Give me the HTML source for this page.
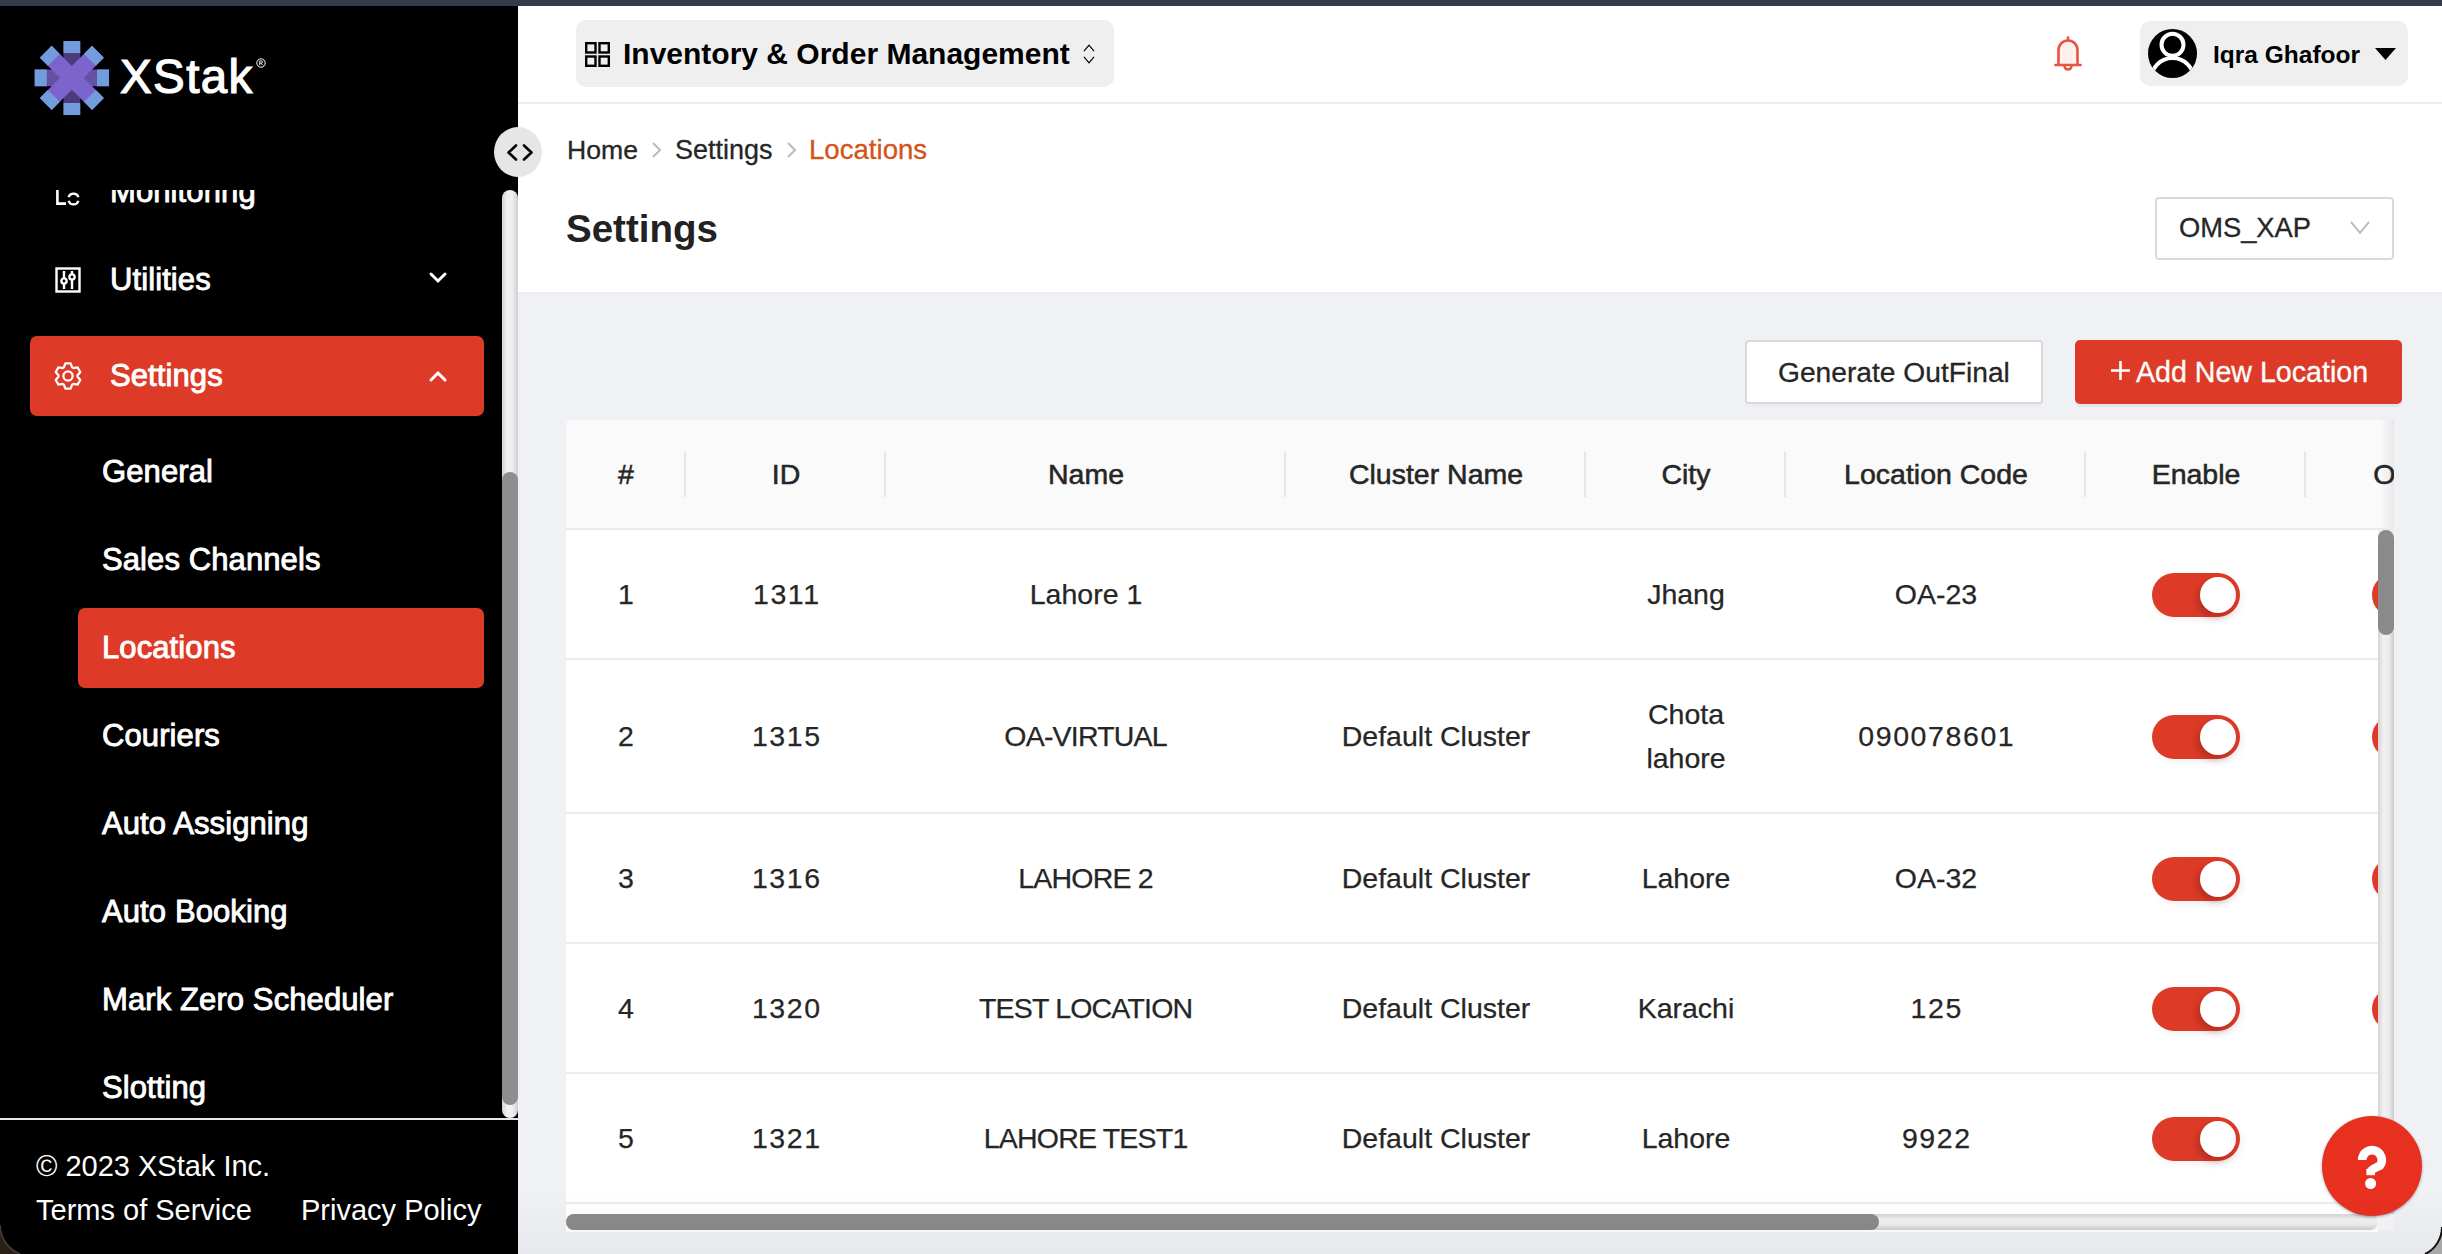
<!DOCTYPE html><html><head><meta charset="utf-8"><style>
*{box-sizing:border-box;margin:0;padding:0}
html,body{width:2442px;height:1254px;overflow:hidden;background:#f0f1f5;font-family:"Liberation Sans",sans-serif}
.a{position:absolute}
.t{position:absolute;white-space:nowrap}
.si{color:#fff;font-size:31px;letter-spacing:0.1px;-webkit-text-stroke:0.9px #fff}
.foot{color:#fff;font-size:29px}
.cell{color:#262626;font-size:28.5px;-webkit-text-stroke:0.25px #262626}
.hd{color:#262626;font-size:28.5px;-webkit-text-stroke:0.55px #262626}
.toggle{position:absolute;width:88px;height:44px;border-radius:22px;background:#dd3b28;box-shadow:3px 4px 6px rgba(0,0,0,.05)}
.toggle:after{content:"";position:absolute;left:48px;top:4px;width:36px;height:36px;border-radius:50%;background:#fff;box-shadow:-3px 4px 7px rgba(110,20,10,.35)}
.rb{position:absolute;left:566px;width:1812px;height:2px;background:#ececec}
.vd{position:absolute;top:452px;width:2px;height:45px;background:#e6e6e6}
</style></head><body>
<div class="a" style="left:0;top:0;width:2442px;height:6px;background:#363a49"></div>
<div class="a" style="left:0;top:6px;width:518px;height:1248px;background:#000"></div>
<svg class="a" style="left:30px;top:36px" width="84" height="84" viewBox="0 0 1254 1254">
<rect x="500" y="75" width="250" height="1105" fill="#4b3b7b"/>
<rect x="70" y="500" width="1110" height="250" fill="#6550a6"/>
<rect x="500" y="75" width="250" height="180" fill="#739cdc"/>
<rect x="500" y="1000" width="250" height="180" fill="#739cdc"/>
<rect x="70" y="500" width="180" height="250" fill="#739cdc"/>
<rect x="1000" y="500" width="180" height="250" fill="#739cdc"/>
<g transform="rotate(45 625 625)"><rect x="74" y="500" width="1102" height="250" fill="#7b64cc"/><rect x="74" y="500" width="170" height="250" fill="#739cdc"/><rect x="1006" y="500" width="170" height="250" fill="#739cdc"/></g>
<g transform="rotate(-45 625 625)"><rect x="74" y="500" width="1102" height="250" fill="#7b64cc"/><rect x="74" y="500" width="170" height="250" fill="#739cdc"/><rect x="1006" y="500" width="170" height="250" fill="#739cdc"/></g>
</svg>
<div class="t " style="left:120px;top:49.099999999999994px;line-height:56px;height:56px;color:#fff;font-size:47.5px;letter-spacing:1.4px;-webkit-text-stroke:1.2px #fff">XStak</div>
<svg class="a" style="left:256px;top:58px" width="10" height="10" viewBox="0 0 10 10" fill="none" stroke="#fff" stroke-width="1"><circle cx="5" cy="5" r="4.2"/><path d="M3.7 7.2 V2.9 H5.4 A1.1 1.1 0 0 1 5.4 5.1 H3.7 M5.2 5.1 L6.5 7.2" stroke-width="0.9"/></svg>
<div class="a" style="left:0;top:190px;width:500px;height:928px;overflow:hidden">
<div class="t si" style="left:110px;top:-18.0px;line-height:40px;height:40px;">Monitoring</div>
<svg class="a" style="left:50px;top:-10px" width="34" height="30" viewBox="0 0 34 30" fill="none" stroke="#fff" stroke-width="2.6">
<path d="M7.4 0 V23.6 H16"/><path d="M18.52 17.19 A5.3 5.3 0 0 1 28.48 17.19" stroke-width="2.2"/><path d="M28.48 20.81 A5.3 5.3 0 0 1 18.52 20.81" stroke-width="2.2"/></svg>
<div class="t si" style="left:110px;top:70.0px;line-height:40px;height:40px;">Utilities</div>
<svg class="a" style="left:54px;top:76px" width="28" height="28" viewBox="0 0 28 28" fill="none" stroke="#fff" stroke-width="2.4">
<rect x="2.5" y="2.5" width="23" height="23"/><path d="M10 5 V23 M18 5 V23"/><circle cx="10" cy="15" r="2.6" fill="#000"/><circle cx="18" cy="11" r="2.6" fill="#000"/></svg>
<svg class="a" style="left:428px;top:80px" width="20" height="16" viewBox="0 0 20 16" fill="none" stroke="#fff" stroke-width="3" stroke-linecap="round"><path d="M3 4 L10 11 L17 4"/></svg>
<div class="a" style="left:30px;top:146px;width:454px;height:80px;background:#dd3b28;border-radius:7px"></div>
<div class="t si" style="left:110px;top:166.0px;line-height:40px;height:40px;">Settings</div>
<svg class="a" style="left:54px;top:172px" width="28" height="28" viewBox="0 0 28 28" fill="none" stroke="#fff" stroke-width="2.2" stroke-linejoin="round">
<path d="M9.94 5.30 L11.32 1.38 L16.68 1.38 L18.06 5.30 L19.51 6.14 L23.59 5.37 L26.27 10.01 L23.56 13.16 L23.56 14.84 L26.27 17.99 L23.59 22.63 L19.51 21.86 L18.06 22.70 L16.68 26.62 L11.32 26.62 L9.94 22.70 L8.49 21.86 L4.41 22.63 L1.73 17.99 L4.44 14.84 L4.44 13.16 L1.73 10.01 L4.41 5.37 L8.49 6.14Z"/><circle cx="14" cy="14" r="4.6"/></svg>
<svg class="a" style="left:428px;top:179px" width="20" height="16" viewBox="0 0 20 16" fill="none" stroke="#fff" stroke-width="3" stroke-linecap="round"><path d="M3 11 L10 4 L17 11"/></svg>
<div class="a" style="left:78px;top:418px;width:406px;height:80px;background:#dd3b28;border-radius:7px"></div>
<div class="t si" style="left:102px;top:262.0px;line-height:40px;height:40px;">General</div>
<div class="t si" style="left:102px;top:350.0px;line-height:40px;height:40px;">Sales Channels</div>
<div class="t si" style="left:102px;top:438.0px;line-height:40px;height:40px;">Locations</div>
<div class="t si" style="left:102px;top:526.0px;line-height:40px;height:40px;">Couriers</div>
<div class="t si" style="left:102px;top:614.0px;line-height:40px;height:40px;">Auto Assigning</div>
<div class="t si" style="left:102px;top:702.0px;line-height:40px;height:40px;">Auto Booking</div>
<div class="t si" style="left:102px;top:790.0px;line-height:40px;height:40px;">Mark Zero Scheduler</div>
<div class="t si" style="left:102px;top:878.0px;line-height:40px;height:40px;">Slotting</div>
</div>
<div class="a" style="left:502px;top:190px;width:16px;height:928px;border-radius:8px;background:linear-gradient(90deg,#d6d6d6,#f2f2f2 35%,#eeeeee 65%,#cfcfcf)"></div>
<div class="a" style="left:502px;top:472px;width:16px;height:633px;border-radius:8px;background:#8e8e8e"></div>
<div class="a" style="left:0;top:1118px;width:518px;height:2px;background:#e6e6e6"></div>
<div class="t foot" style="left:36px;top:1145.7px;line-height:40px;height:40px;">&copy; 2023 XStak Inc.</div>
<div class="t foot" style="left:36px;top:1190.0px;line-height:40px;height:40px;">Terms of Service</div>
<div class="t foot" style="left:301px;top:1190.0px;line-height:40px;height:40px;">Privacy Policy</div>
<div class="a" style="left:518px;top:6px;width:1924px;height:286px;background:#fff"></div>
<div class="a" style="left:518px;top:102px;width:1924px;height:2px;background:#ececec"></div>
<div class="a" style="left:576px;top:20px;width:538px;height:67px;background:#efefef;border-radius:10px"></div>
<svg class="a" style="left:585px;top:42px" width="25" height="25" viewBox="0 0 25 25" fill="none" stroke="#000" stroke-width="2.4">
<rect x="1.2" y="1.2" width="9.3" height="9.3"/><rect x="14.5" y="1.2" width="9.3" height="9.3"/><rect x="1.2" y="14.5" width="9.3" height="9.3"/><rect x="14.5" y="14.5" width="9.3" height="9.3"/></svg>
<div class="t " style="left:623px;top:34.1px;line-height:40px;height:40px;color:#000;font-weight:bold;font-size:30px">Inventory &amp; Order Management</div>
<svg class="a" style="left:1083px;top:44px" width="12" height="21" viewBox="0 0 12 21" fill="none" stroke="#000" stroke-width="1.2"><path d="M1 7.2 L6 1.2 L11 7.2 M1 12.8 L6 18.8 L11 12.8"/></svg>
<svg class="a" style="left:2052px;top:34px" width="32" height="40" viewBox="0 0 32 40" fill="#fdf0ee" stroke="#e8553f" stroke-width="2.6" stroke-linejoin="round" stroke-linecap="round">
<path d="M16 3.5 V6.5"/><path d="M6.5 30 V16 A9.5 9.5 0 0 1 25.5 16 V30"/><path d="M3.5 31 H28.5"/><path d="M12.5 32 A3.5 3.5 0 0 0 19.5 32"/></svg>
<div class="a" style="left:2140px;top:21px;width:268px;height:65px;background:#efefef;border-radius:10px"></div>
<svg class="a" style="left:2148px;top:29px" width="49" height="49" viewBox="0 0 49 49">
<defs><clipPath id="cc"><circle cx="24.5" cy="24.5" r="24.5"/></clipPath></defs>
<circle cx="24.5" cy="24.5" r="24.5" fill="#000"/>
<g clip-path="url(#cc)" fill="none" stroke="#fff" stroke-width="3.6"><circle cx="24.5" cy="15.8" r="11" stroke-width="4"/><circle cx="24.5" cy="50.5" r="21.5" stroke-width="4"/></g></svg>
<div class="t " style="left:2213px;top:34.5px;line-height:40px;height:40px;color:#000;font-weight:bold;font-size:24.5px">Iqra Ghafoor</div>
<svg class="a" style="left:2375px;top:47px" width="21" height="14" viewBox="0 0 21 14"><path d="M0 1 H21 L10.5 13 Z" fill="#000"/></svg>
<div class="a" style="left:494px;top:127px;width:48px;height:50px;border-radius:50%;background:#e6e6e6"></div>
<svg class="a" style="left:505px;top:143px" width="30" height="18" viewBox="0 0 30 18" fill="none" stroke="#000" stroke-width="2.6"><path d="M11 2.5 L3.5 9.5 L11 16.5 M19 2.5 L26.5 9.5 L19 16.5" stroke-linecap="round" stroke-linejoin="round"/></svg>
<div class="t " style="left:567px;top:130.0px;line-height:40px;height:40px;color:#262626;font-size:26.6px;-webkit-text-stroke:0.3px #262626">Home</div>
<svg class="a" style="left:650px;top:141px" width="14" height="18" viewBox="0 0 14 18" fill="none" stroke="#bdbdbd" stroke-width="2.2"><path d="M3 2 L10 9 L3 16"/></svg>
<div class="t " style="left:675px;top:130.0px;line-height:40px;height:40px;color:#262626;font-size:27px;-webkit-text-stroke:0.3px #262626">Settings</div>
<svg class="a" style="left:785px;top:141px" width="14" height="18" viewBox="0 0 14 18" fill="none" stroke="#bdbdbd" stroke-width="2.2"><path d="M3 2 L10 9 L3 16"/></svg>
<div class="t " style="left:809px;top:130.0px;line-height:40px;height:40px;color:#d35319;font-size:27.6px;-webkit-text-stroke:0.3px #d35319">Locations</div>
<div class="t " style="left:566px;top:203.6px;line-height:50px;height:50px;color:#222;font-weight:bold;font-size:38.5px">Settings</div>
<div class="a" style="left:2155px;top:197px;width:239px;height:63px;border:2px solid #d9d9d9;border-radius:4px;background:#fff"></div>
<div class="t " style="left:2179px;top:207.9px;line-height:40px;height:40px;color:#262626;font-size:27.3px;-webkit-text-stroke:0.3px #262626">OMS_XAP</div>
<svg class="a" style="left:2349px;top:219px" width="22" height="18" viewBox="0 0 22 18" fill="none" stroke="#bfbfbf" stroke-width="2"><path d="M2 3 L11 14 L20 3"/></svg>
<div class="a" style="left:1745px;top:340px;width:298px;height:64px;border:2px solid #d9d9d9;border-radius:4px;background:#fff;box-shadow:0 3px 0 rgba(0,0,0,.016)"></div>
<div class="t " style="left:1778px;top:352.0px;line-height:40px;height:40px;color:#262626;font-size:28.2px;-webkit-text-stroke:0.3px #262626">Generate OutFinal</div>
<div class="a" style="left:2075px;top:340px;width:327px;height:64px;border-radius:5px;background:#dd3b28;box-shadow:0 3px 0 rgba(0,0,0,.045)"></div>
<div class="t " style="left:2136px;top:352.0px;line-height:40px;height:40px;color:#fff;font-size:28.6px;-webkit-text-stroke:0.3px #fff">Add New Location</div>
<svg class="a" style="left:2111px;top:361px" width="19" height="19" viewBox="0 0 19 19" stroke="#fff" stroke-width="2.6"><path d="M9.5 0 V19 M0 9.5 H19"/></svg>
<div class="a" style="left:566px;top:420px;width:1828px;height:108px;background:#fafafa;border-radius:5px 5px 0 0"></div>
<div class="a" style="left:518px;top:292px;width:1924px;height:4px;background:linear-gradient(180deg,rgba(0,0,0,.025),rgba(0,0,0,0))"></div>
<div class="a" style="left:2380px;top:420px;width:14px;height:108px;background:linear-gradient(90deg,rgba(0,0,0,0),rgba(0,0,0,.07))"></div>
<div class="a" style="left:566px;top:528px;width:1828px;height:2px;background:#ebebeb"></div>
<div class="a" style="left:566px;top:530px;width:1812px;height:702px;background:#fff"></div>
<div class="vd" style="left:684px"></div>
<div class="vd" style="left:884px"></div>
<div class="vd" style="left:1284px"></div>
<div class="vd" style="left:1584px"></div>
<div class="vd" style="left:1784px"></div>
<div class="vd" style="left:2084px"></div>
<div class="vd" style="left:2304px"></div>
<div class="a" style="left:566px;top:420px;width:1828px;height:108px;overflow:hidden">
<div class="t hd" style="left:-70.0px;top:34.0px;width:260px;text-align:center;line-height:40px;height:40px;">#</div>
<div class="t hd" style="left:90.0px;top:34.0px;width:260px;text-align:center;line-height:40px;height:40px;">ID</div>
<div class="t hd" style="left:390.0px;top:34.0px;width:260px;text-align:center;line-height:40px;height:40px;">Name</div>
<div class="t hd" style="left:740.0px;top:34.0px;width:260px;text-align:center;line-height:40px;height:40px;">Cluster Name</div>
<div class="t hd" style="left:990.0px;top:34.0px;width:260px;text-align:center;line-height:40px;height:40px;">City</div>
<div class="t hd" style="left:1240.0px;top:34.0px;width:260px;text-align:center;line-height:40px;height:40px;">Location Code</div>
<div class="t hd" style="left:1500.0px;top:34.0px;width:260px;text-align:center;line-height:40px;height:40px;">Enable</div>
<div class="t hd" style="left:1713.0px;top:34.0px;width:260px;text-align:center;line-height:40px;height:40px;">Other</div>
</div>
<div class="rb" style="top:658px"></div>
<div class="rb" style="top:812px"></div>
<div class="rb" style="top:942px"></div>
<div class="rb" style="top:1072px"></div>
<div class="rb" style="top:1202px"></div>
<div class="a" style="left:566px;top:530px;width:1812px;height:690px;overflow:hidden">
<div class="t cell" style="left:-90.0px;top:44.0px;width:300px;text-align:center;line-height:40px;height:40px;">1</div>
<div class="t cell" style="left:70.0px;top:44.0px;width:300px;text-align:center;line-height:40px;height:40px;letter-spacing:1.6px;text-indent:1.6px">1311</div>
<div class="t cell" style="left:370.0px;top:44.0px;width:300px;text-align:center;line-height:40px;height:40px;">Lahore 1</div>
<div class="t cell" style="left:720.0px;top:44.0px;width:300px;text-align:center;line-height:40px;height:40px;"></div>
<div class="t cell" style="left:970.0px;top:44.0px;width:300px;text-align:center;line-height:40px;height:40px;">Jhang</div>
<div class="t cell" style="left:1220.0px;top:44.0px;width:300px;text-align:center;line-height:40px;height:40px;">OA-23</div>
<div class="toggle" style="left:1586px;top:43px"></div>
<div class="toggle" style="left:1806px;top:43px"></div>
<div class="t cell" style="left:-90.0px;top:186.0px;width:300px;text-align:center;line-height:40px;height:40px;">2</div>
<div class="t cell" style="left:70.0px;top:186.0px;width:300px;text-align:center;line-height:40px;height:40px;letter-spacing:1.6px;text-indent:1.6px">1315</div>
<div class="t cell" style="left:370.0px;top:186.0px;width:300px;text-align:center;line-height:40px;height:40px;letter-spacing:-0.8px;text-indent:-0.8px">OA-VIRTUAL</div>
<div class="t cell" style="left:720.0px;top:186.0px;width:300px;text-align:center;line-height:40px;height:40px;">Default Cluster</div>
<div class="t cell" style="left:990px;top:162px;width:260px;text-align:center;line-height:44px;white-space:normal">Chota<br>lahore</div>
<div class="t cell" style="left:1220.0px;top:186.0px;width:300px;text-align:center;line-height:40px;height:40px;letter-spacing:1.6px;text-indent:1.6px">090078601</div>
<div class="toggle" style="left:1586px;top:185px"></div>
<div class="toggle" style="left:1806px;top:185px"></div>
<div class="t cell" style="left:-90.0px;top:328.0px;width:300px;text-align:center;line-height:40px;height:40px;">3</div>
<div class="t cell" style="left:70.0px;top:328.0px;width:300px;text-align:center;line-height:40px;height:40px;letter-spacing:1.6px;text-indent:1.6px">1316</div>
<div class="t cell" style="left:370.0px;top:328.0px;width:300px;text-align:center;line-height:40px;height:40px;letter-spacing:-0.8px;text-indent:-0.8px">LAHORE 2</div>
<div class="t cell" style="left:720.0px;top:328.0px;width:300px;text-align:center;line-height:40px;height:40px;">Default Cluster</div>
<div class="t cell" style="left:970.0px;top:328.0px;width:300px;text-align:center;line-height:40px;height:40px;">Lahore</div>
<div class="t cell" style="left:1220.0px;top:328.0px;width:300px;text-align:center;line-height:40px;height:40px;">OA-32</div>
<div class="toggle" style="left:1586px;top:327px"></div>
<div class="toggle" style="left:1806px;top:327px"></div>
<div class="t cell" style="left:-90.0px;top:458.0px;width:300px;text-align:center;line-height:40px;height:40px;">4</div>
<div class="t cell" style="left:70.0px;top:458.0px;width:300px;text-align:center;line-height:40px;height:40px;letter-spacing:1.6px;text-indent:1.6px">1320</div>
<div class="t cell" style="left:370.0px;top:458.0px;width:300px;text-align:center;line-height:40px;height:40px;letter-spacing:-0.8px;text-indent:-0.8px">TEST LOCATION</div>
<div class="t cell" style="left:720.0px;top:458.0px;width:300px;text-align:center;line-height:40px;height:40px;">Default Cluster</div>
<div class="t cell" style="left:970.0px;top:458.0px;width:300px;text-align:center;line-height:40px;height:40px;">Karachi</div>
<div class="t cell" style="left:1220.0px;top:458.0px;width:300px;text-align:center;line-height:40px;height:40px;letter-spacing:1.6px;text-indent:1.6px">125</div>
<div class="toggle" style="left:1586px;top:457px"></div>
<div class="toggle" style="left:1806px;top:457px"></div>
<div class="t cell" style="left:-90.0px;top:588.0px;width:300px;text-align:center;line-height:40px;height:40px;">5</div>
<div class="t cell" style="left:70.0px;top:588.0px;width:300px;text-align:center;line-height:40px;height:40px;letter-spacing:1.6px;text-indent:1.6px">1321</div>
<div class="t cell" style="left:370.0px;top:588.0px;width:300px;text-align:center;line-height:40px;height:40px;letter-spacing:-0.8px;text-indent:-0.8px">LAHORE TEST1</div>
<div class="t cell" style="left:720.0px;top:588.0px;width:300px;text-align:center;line-height:40px;height:40px;">Default Cluster</div>
<div class="t cell" style="left:970.0px;top:588.0px;width:300px;text-align:center;line-height:40px;height:40px;">Lahore</div>
<div class="t cell" style="left:1220.0px;top:588.0px;width:300px;text-align:center;line-height:40px;height:40px;letter-spacing:1.6px;text-indent:1.6px">9922</div>
<div class="toggle" style="left:1586px;top:587px"></div>
<div class="toggle" style="left:1806px;top:587px"></div>
</div>
<div class="a" style="left:2378px;top:580px;width:16px;height:634px;background:linear-gradient(90deg,#d4d4d4,#f1f1f1 35%,#ededed 65%,#cdcdcd)"></div>
<div class="a" style="left:2378px;top:530px;width:16px;height:105px;border-radius:8px;background:#8a8a8a"></div>
<div class="a" style="left:566px;top:1214px;width:1812px;height:16px;border-radius:8px;background:linear-gradient(180deg,#d4d4d4,#f1f1f1 35%,#ededed 65%,#cdcdcd)"></div>
<div class="a" style="left:566px;top:1214px;width:1313px;height:16px;border-radius:8px;background:#8a8a8a"></div>
<div class="a" style="left:2378px;top:1214px;width:16px;height:16px;background:#f6f6f6"></div>
<div class="a" style="left:2322px;top:1116px;width:100px;height:100px;border-radius:50%;background:#e8301f;box-shadow:0 1px 3px rgba(0,0,60,.35)"></div>
<svg class="a" style="left:2350px;top:1140px" width="44" height="52" viewBox="0 0 44 52"><path d="M12.2 20 A9.8 9.8 0 1 1 30 25.6 Q21 29.5 20.7 31" fill="none" stroke="#fff" stroke-width="8.6"/><rect x="16.4" y="29" width="8.6" height="6.2" fill="#fff"/><circle cx="20.6" cy="43.5" r="5.5" fill="#fff"/></svg>
<div class="a" style="left:518px;top:1190px;width:1924px;height:64px;background:linear-gradient(180deg,rgba(0,0,30,0),rgba(0,0,30,.035))"></div>
<svg class="a" style="left:0;top:1214px" width="40" height="40" viewBox="0 0 40 40"><path d="M0 11 A31 31 0 0 0 20.05 40 L0 40 Z" fill="#2a1f15"/><path d="M0 11 A31 31 0 0 0 20.05 40" fill="none" stroke="#3a3a3a" stroke-width="2"/></svg>
<svg class="a" style="left:2402px;top:1214px" width="40" height="40" viewBox="0 0 40 40"><path d="M40 13 A30 30 0 0 1 23.08 40 L40 40 Z" fill="#a8a8a8"/><path d="M40 13 A30 30 0 0 1 23.08 40" fill="none" stroke="#111" stroke-width="2"/></svg>
</body></html>
